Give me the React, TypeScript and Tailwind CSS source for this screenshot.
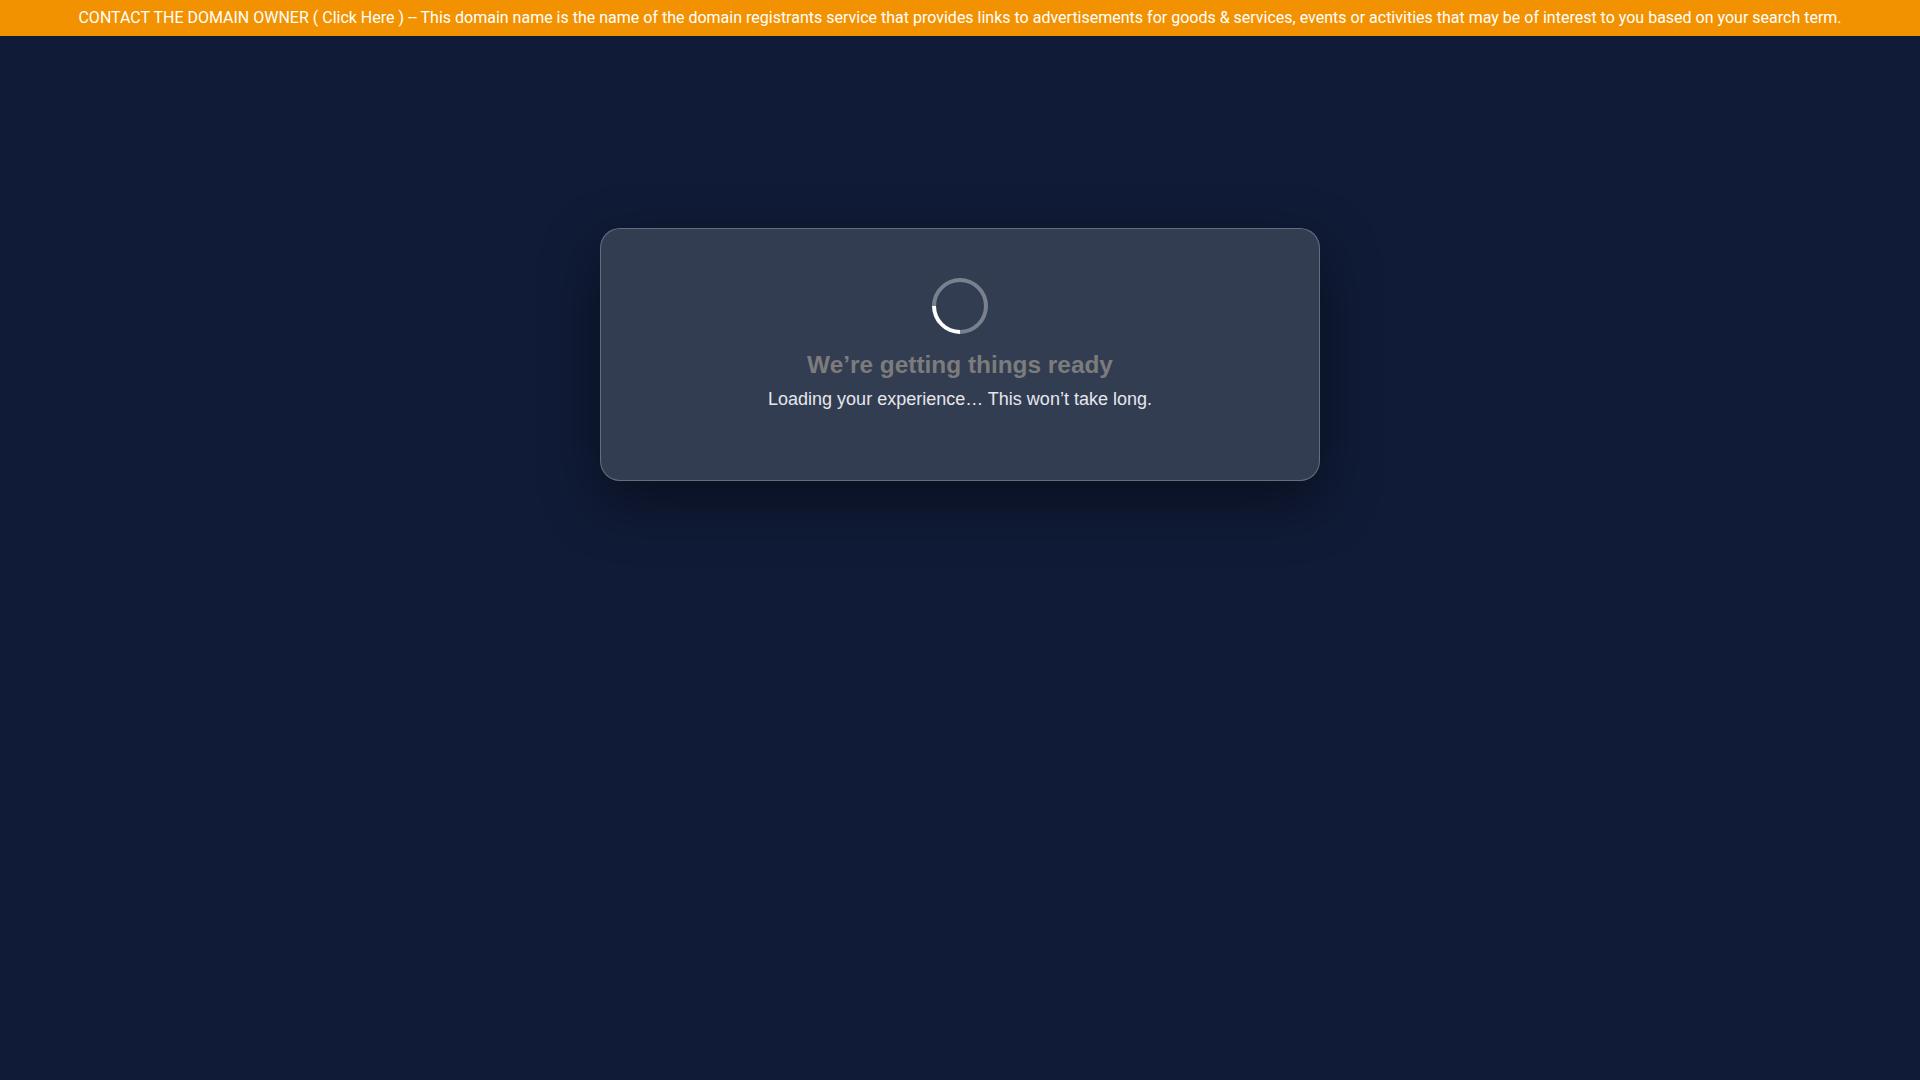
import React from "react";

const TopBar: React.FC = () => {
    return (
        <div className="w-full h-[36px] bg-[#f39200] flex items-center justify-center">
            <p className="text-[16px] text-white font-['Roboto',sans-serif] whitespace-nowrap leading-none">
                CONTACT THE DOMAIN OWNER ( <a className="cursor-pointer">Click Here</a> ) -- This domain name is the name of the domain registrants service that provides links to advertisements for goods &amp; services, events or activities that may be of interest to you based on your search term.
            </p>
        </div>
    );
};

const Spinner: React.FC = () => (
    <div className="w-14 h-14 rounded-full border-4 border-white/35 border-l-white -rotate-45" />
);

const App: React.FC = () => {
    return (
        <div className="min-h-screen w-full bg-[#101b37] flex flex-col font-['Liberation_Sans',Arial,sans-serif]">
            <TopBar />

            <div className="flex justify-center pt-[192px]">
                <div className="w-[720px] h-[253px] bg-[#333d52] border border-white/25 rounded-[20px] shadow-[0_20px_60px_rgba(0,0,0,0.45)] pt-[49px] flex flex-col items-center">
                    <Spinner />
                    <h1 className="mt-[15px] text-[24.4px] leading-[32px] font-bold text-[#7c7c7c]">
                        We’re getting things ready
                    </h1>
                    <p className="mt-[4px] text-[18px] leading-[28px] text-[#e5e7eb]">
                        Loading your experience… This won’t take long.
                    </p>
                </div>
            </div>
        </div>
    );
};

export default App;
